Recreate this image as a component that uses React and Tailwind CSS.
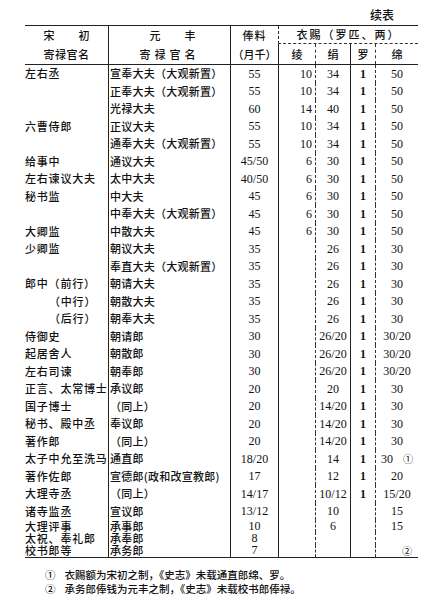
import React from 'react';

const COLS = 'grid grid-cols-[83px_122px_48px_37px_35px_25px_43px]';
const CJK = { fontFamily: "'Noto Sans CJK SC', sans-serif" };
const NUM = { fontFamily: "'Liberation Serif', 'Noto Sans CJK SC', serif" };

// [宋初, 元丰, 俸料, 绫, 绢, 罗, 绵, indent]
const ROWS = [
  ['左右丞', '宣奉大夫（大观新置）', '55', '10', '34', '1', '50'],
  ['', '正奉大夫（大观新置）', '55', '10', '34', '1', '50'],
  ['', '光禄大夫', '60', '14', '40', '1', '50'],
  ['六曹侍郎', '正议大夫', '55', '10', '34', '1', '50'],
  ['', '通奉大夫（大观新置）', '55', '10', '34', '1', '50'],
  ['给事中', '通议大夫', '45/50', '6', '30', '1', '50'],
  ['左右谏议大夫', '太中大夫', '40/50', '6', '30', '1', '50'],
  ['秘书监', '中大夫', '45', '6', '30', '1', '50'],
  ['', '中奉大夫（大观新置）', '45', '6', '30', '1', '50'],
  ['大卿监', '中散大夫', '45', '6', '30', '1', '50'],
  ['少卿监', '朝议大夫', '35', '', '26', '1', '30'],
  ['', '奉直大夫（大观新置）', '35', '', '26', '1', '30'],
  ['郎中（前行）', '朝请大夫', '35', '', '26', '1', '30'],
  ['（中行）', '朝散大夫', '35', '', '26', '1', '30', true],
  ['（后行）', '朝奉大夫', '35', '', '26', '1', '30', true],
  ['侍御史', '朝请郎', '30', '', '26/20', '1', '30/20'],
  ['起居舍人', '朝散郎', '30', '', '26/20', '1', '30/20'],
  ['左右司谏', '朝奉郎', '30', '', '26/20', '1', '30/20'],
  ['正言、太常博士', '承议郎', '20', '', '20', '1', '30'],
  ['国子博士', '（同上）', '20', '', '14/20', '1', '30'],
  ['秘书、殿中丞', '奉议郎', '20', '', '14/20', '1', '30'],
  ['著作郎', '（同上）', '20', '', '14/20', '1', '30'],
  ['太子中允至洗马', '通直郎', '18/20', '', '14', '1', 'note1'],
  ['著作佐郎', '宣德郎(政和改宣教郎)', '17', '', '12', '1', '20'],
  ['大理寺丞', '（同上）', '14/17', '', '10/12', '1', '15/20'],
  ['诸寺监丞', '宣议郎', '13/12', '', '10', '', '15'],
];

// last three lines are squeezed together in the source
const SHORT_ROWS = [
  ['大理评事', '承事郎', '10', '', '6', '', '15'],
  ['太祝、奉礼郎', '承奉郎', '8', '', '', '', ''],
  ['校书郎等', '承务郎', '7', '', '', '', 'note2'],
];

function Row({ r, h, tight }) {
  const [a, b, pay, ling, juan, luo, mian, indent] = r;
  const lh = tight ? 'leading-[11px]' : 'leading-none';
  return (
    <div className={`${COLS} ${h}`}>
      <div
        className={`flex items-center whitespace-nowrap text-[11px] font-medium tracking-[0.8px] ${lh} ${indent ? 'pl-[24px]' : ''}`}
        style={CJK}
      >
        {a}
      </div>
      <div
        className={`flex items-center whitespace-nowrap border-l border-[#222] pl-[1px] text-[11px] font-medium tracking-[0.25px] ${lh}`}
        style={CJK}
      >
        {b}
      </div>
      <div className={`flex items-center justify-center border-l border-[#222] text-[12px] ${lh}`} style={NUM}>
        {pay}
      </div>
      <div className={`flex items-center justify-end border-l border-[#222] pr-[3px] text-[12px] ${lh}`} style={NUM}>
        {ling}
      </div>
      <div className={`flex items-center justify-center border-l border-dashed border-[#333] text-[12px] ${lh}`} style={NUM}>
        {juan}
      </div>
      <div className={`flex items-center justify-center border-l border-[#222] text-[12px] font-bold ${lh}`} style={NUM}>
        {luo}
      </div>
      {mian === 'note1' ? (
        <div className="flex items-center gap-[10px] border-l border-dashed border-[#333] pl-[5px] text-[12px] leading-none" style={NUM}>
          <span>30</span>
          <span className="text-[10px]" style={CJK}>①</span>
        </div>
      ) : mian === 'note2' ? (
        <div className="flex items-center justify-end border-l border-dashed border-[#333] pr-[6px] text-[10px] leading-none" style={CJK}>
          ②
        </div>
      ) : (
        <div className={`flex items-center justify-center border-l border-dashed border-[#333] text-[12px] ${lh}`} style={NUM}>
          {mian}
        </div>
      )}
    </div>
  );
}

export default function App() {
  return (
    <div className="h-[603px] w-[444px] overflow-hidden bg-white pl-[25px] pt-[8px] text-[#111]">
      <div className="w-[393px] pr-[24px] text-right text-[12px] font-medium leading-[14px]" style={CJK}>
        续表
      </div>

      <div className="mt-[3px] w-[393px] border-b-[1.5px] border-t-[1.5px] border-[#222]">
        {/* header */}
        <div className={`${COLS} grid-rows-[18px_20px] border-b border-[#222] text-[11px] font-medium leading-none`} style={CJK}>
          <div className="col-start-1 row-start-1 flex items-center justify-center gap-[24px]">
            <span>宋</span>
            <span>初</span>
          </div>
          <div className="col-start-2 row-start-1 flex items-center justify-center gap-[24px] border-l border-[#222] pl-[6px]">
            <span>元</span>
            <span>丰</span>
          </div>
          <div className="col-start-3 row-start-1 flex items-center justify-center border-l border-[#222] tracking-[1px]">
            俸料
          </div>
          <div className="col-span-4 col-start-4 row-start-1 flex items-center justify-center border-b border-l border-dashed border-b-[#333] border-l-[#222] tracking-[2px]">
            衣赐（罗匹、两）
          </div>
          <div className="col-start-1 row-start-2 flex items-center justify-center tracking-[0.5px]">
            寄禄官名
          </div>
          <div className="col-start-2 row-start-2 flex items-center justify-center border-l border-[#222] tracking-[4px]">
            寄禄官名
          </div>
          <div className="col-start-3 row-start-2 flex items-center justify-center border-l border-[#222]">
            （月千）
          </div>
          <div className="col-start-4 row-start-2 flex items-center justify-center border-l border-[#222]">绫</div>
          <div className="col-start-5 row-start-2 flex items-center justify-center border-l border-dashed border-[#333]">绢</div>
          <div className="col-start-6 row-start-2 flex items-center justify-center border-l border-[#222]">罗</div>
          <div className="col-start-7 row-start-2 flex items-center justify-center border-l border-dashed border-[#333]">绵</div>
        </div>

        {ROWS.map((r, i) => (
          <Row key={i} r={r} h="h-[17.5px]" />
        ))}
        {SHORT_ROWS.map((r, i) => (
          <Row key={'s' + i} r={r} h="h-[12.4px]" tight />
        ))}
      </div>

      <div className="mt-[11px] flex flex-col gap-[2px] text-[10.5px] font-medium leading-[12px]" style={CJK}>
        <div className="flex gap-[9px] pl-[20px]">
          <span>①</span>
          <span>衣赐额为宋初之制，《史志》未载通直郎绵、罗。</span>
        </div>
        <div className="flex gap-[9px] pl-[20px]">
          <span>②</span>
          <span>承务郎俸钱为元丰之制，《史志》未载校书郎俸禄。</span>
        </div>
      </div>
    </div>
  );
}
